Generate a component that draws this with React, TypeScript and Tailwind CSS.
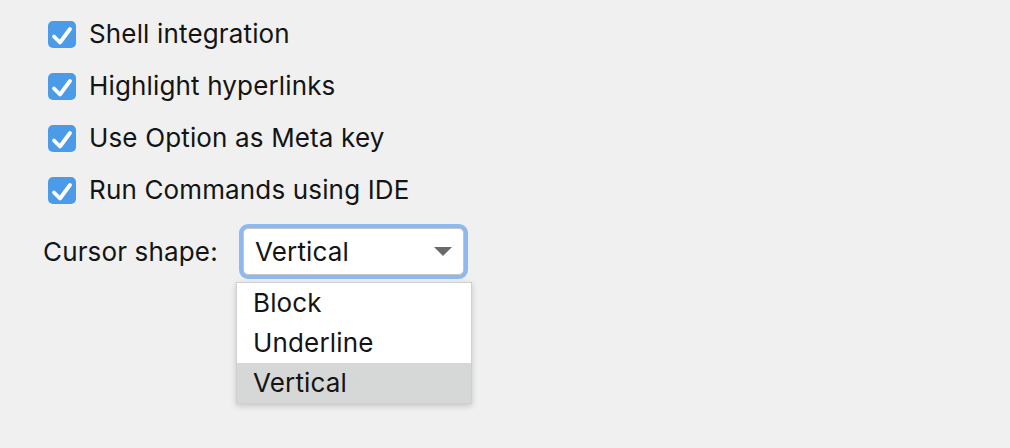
import React from "react";

const font = { fontFamily: "Inter, 'Noto Sans', sans-serif" };

function Check({ label }: { label: string }) {
  return (
    <div className="flex h-[28px] items-center gap-[13px] pl-[5px]">
      <div className="flex h-[27px] w-[28px] items-center justify-center rounded-[5px] bg-[#4c9be8]">
        <svg width="28" height="27" viewBox="0 0 28 27" fill="none">
          <path d="M6 15.5 L12 21.5 L22 8" stroke="white" strokeWidth="3.8" strokeLinecap="round" strokeLinejoin="round" />
        </svg>
      </div>
      <span className="text-[26px] leading-none tracking-[0.15px] text-[#141414]">{label}</span>
    </div>
  );
}

export default function App() {
  return (
    <div className="h-[448px] w-[1010px] bg-[#f0f0f0] pl-[43px] pt-[20px]" style={font}>
      <div className="flex flex-col gap-[24px]">
        <Check label="Shell integration" />
        <Check label="Highlight hyperlinks" />
        <Check label="Use Option as Meta key" />
        <Check label="Run Commands using IDE" />
      </div>
      <div className="mt-[24px] flex items-center">
        <span className="w-[200px] text-[26px] leading-none tracking-[0.15px] text-[#141414]">Cursor shape:</span>
        <div className="relative">
          <div className="flex h-[47px] w-[221px] items-center justify-between rounded-[5px] border border-[#c4c4c4] bg-white pl-[11px] pr-[11px] shadow-[0_0_0_4px_#8db9ef]">
            <span className="text-[26px] leading-none tracking-[0.15px] text-[#141414]">Vertical</span>
            <svg width="18" height="9" viewBox="0 0 18 9">
              <path d="M0 0 L18 0 L9 9 Z" fill="#6a6a6a" />
            </svg>
          </div>
          <div className="absolute left-[-7px] top-[54px] flex w-[236px] flex-col border border-[#d0d0d0] bg-white shadow-[0_2px_6px_rgba(0,0,0,0.18)]">
            {["Block", "Underline", "Vertical"].map((t, i) => (
              <div
                key={t}
                className={
                  "flex h-[40px] items-center pl-[16px] text-[26px] leading-none tracking-[0.15px] text-[#141414] " +
                  (i === 2 ? "bg-[#d6d7d7]" : "")
                }
              >
                {t}
              </div>
            ))}
          </div>
        </div>
      </div>
    </div>
  );
}
